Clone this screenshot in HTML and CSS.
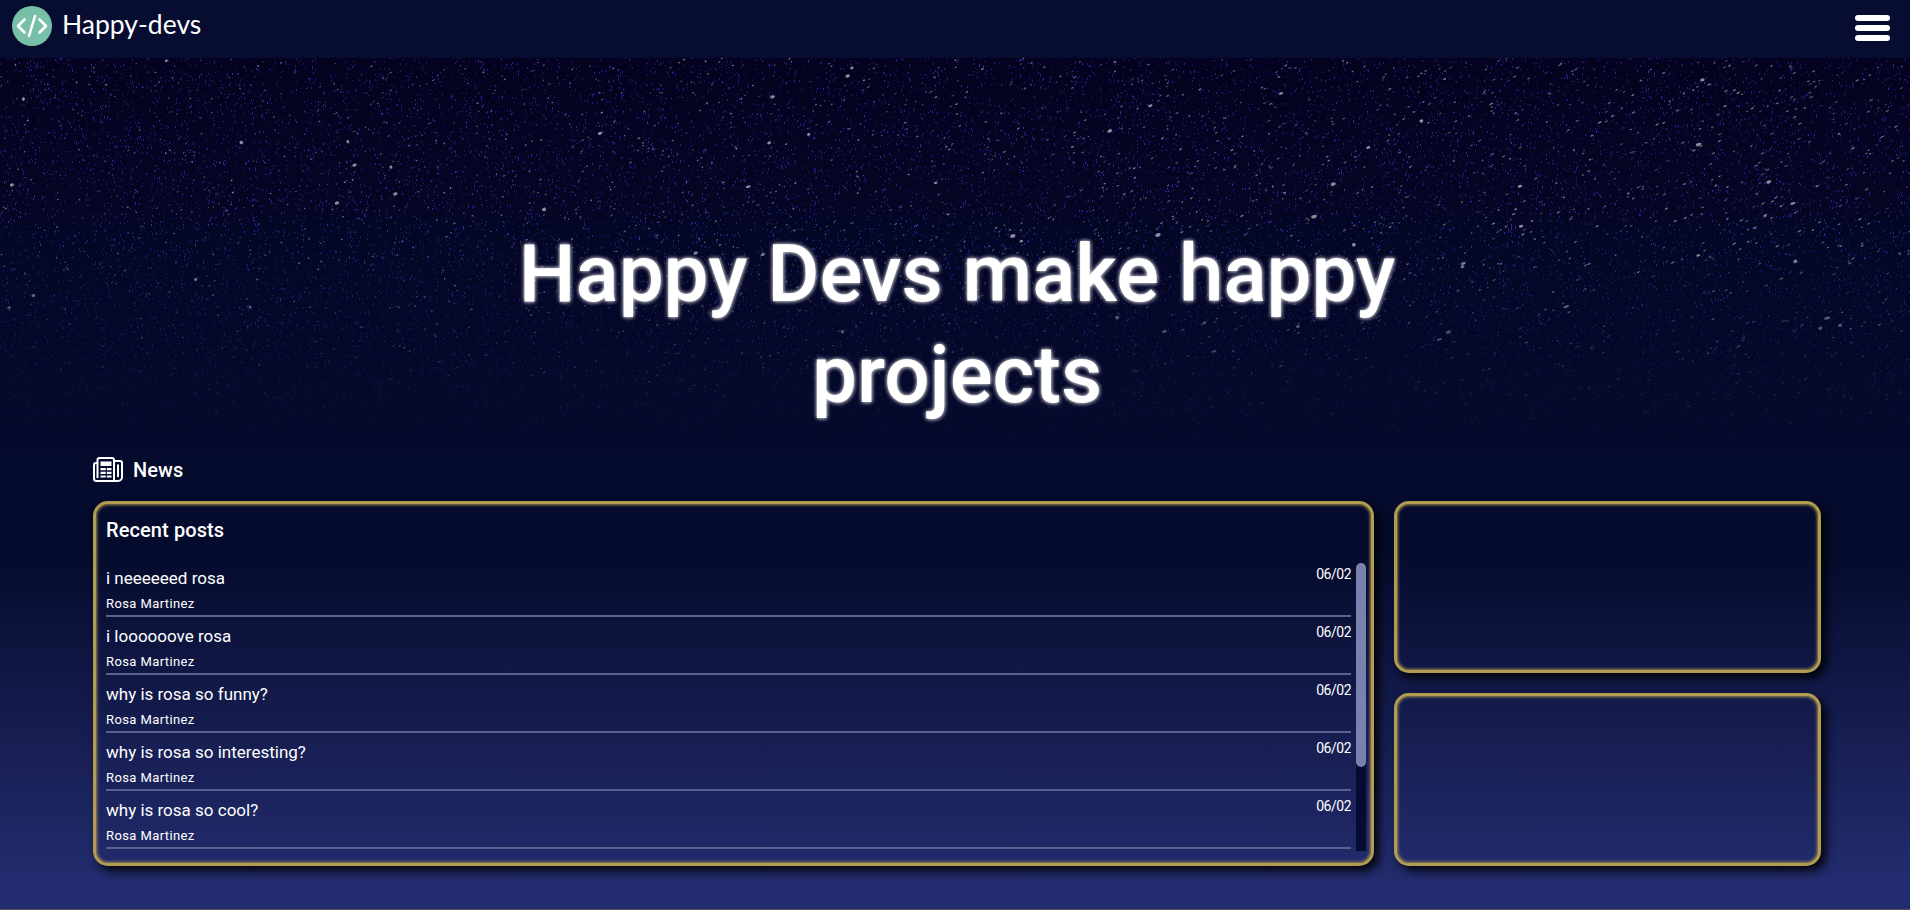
FILE: index.html
```html
<!DOCTYPE html>
<html lang="en">
<head>
	<meta charset="UTF-8">
	<title>Happy-devs</title>
	<link rel="stylesheet" href="styles.css">
</head>
<body>
<header class="topbar">
	<a class="brand" href="#">
		<svg class="brand-logo" viewBox="0 0 40 40">
			<circle cx="20" cy="20" r="20" fill="#77bfa8"/>
			<path d="M12.500 13.500 6 20l6.500 6.500M27.500 13.500 34 20l-6.500 6.500M23 10l-6 20" fill="none" stroke="#fff" stroke-width="2.600" stroke-linecap="round" stroke-linejoin="round"/>
		</svg>
		<span class="brand-name">Happy-devs</span>
	</a>
	<button class="menu-btn" type="button" aria-label="Menu"><i></i><i></i><i></i></button>
</header>
<section class="hero">
	<canvas id="stars" class="hero-stars"></canvas>
	<h1 class="hero-title">Happy Devs make happy projects</h1>
</section>
<main class="content">
	<h2 class="section-title">
		<svg class="section-icon" viewBox="0 0 30 25">
			<path d="M4.500 6V3a2 2 0 0 1 2-2H19a2 2 0 0 1 2 2v21H3.500A2.500 2.500 0 0 1 1 21.500V8a2 2 0 0 1 2-2h1.500v15" fill="none" stroke="#fff" stroke-width="2"/>
			<path d="M21 4h6a2 2 0 0 1 2 2v14a4 4 0 0 1-4 4h-4M25 7.500V20" fill="none" stroke="#fff" stroke-width="2"/>
			<path d="M7.500 4.500H18.500v4.500H7.500zM7.500 11h5.200v2.200H7.500zM13.800 11h4.700v2.200h-4.700zM7.500 14.700h5.200v2.200H7.500zM13.800 14.700h4.700v2.200h-4.700zM7.500 18.400h5.200v2.200H7.500zM13.800 18.400h4.700v2.200h-4.700z" fill="#fff"/>
		</svg>
		News
	</h2>
	<div class="panels">
		<section class="panel panel-posts">
			<h3 class="panel-title">Recent posts</h3>
			<div class="posts-wrap">
				<ul class="posts">
					<li class="post"><div><p class="post-title">i neeeeeed rosa</p><p class="post-author">Rosa Martinez</p></div><time class="post-date">06/02</time></li>
					<li class="post"><div><p class="post-title">i loooooove rosa</p><p class="post-author">Rosa Martinez</p></div><time class="post-date">06/02</time></li>
					<li class="post"><div><p class="post-title">why is rosa so funny?</p><p class="post-author">Rosa Martinez</p></div><time class="post-date">06/02</time></li>
					<li class="post"><div><p class="post-title">why is rosa so interesting?</p><p class="post-author">Rosa Martinez</p></div><time class="post-date">06/02</time></li>
					<li class="post"><div><p class="post-title">why is rosa so cool?</p><p class="post-author">Rosa Martinez</p></div><time class="post-date">06/02</time></li>
				</ul>
				<div class="scrollbar"><div class="scrollbar-thumb"></div></div>
			</div>
		</section>
		<section class="panel"></section>
		<section class="panel"></section>
	</div>
</main>
<script src="stars.js"></script>
</body>
</html>
```

FILE: styles.css
```css
* {
	box-sizing: border-box;
}
html, body {
	margin: 0;
	height: 910px;
	overflow: hidden;
}
body {
	display: flex;
	flex-direction: column;
	font-family: Roboto, "Liberation Sans", sans-serif;
	color: #fff;
	background: linear-gradient(#050b2c 0, #050b2c 550px, #232c6e 880px, #232c6e 910px);
	border-bottom: 1px solid #55534f;
}
.topbar {
	height: 58px;
	flex: none;
	display: flex;
	align-items: flex-start;
	justify-content: space-between;
	padding: 6px 20px 0 12px;
	background: #060d30;
}
.brand {
	display: flex;
	align-items: center;
	gap: 10px;
	color: #fff;
	text-decoration: none;
}
.brand-logo {
	width: 40px;
	height: 40px;
}
.brand-name {
	font-family: Lato, sans-serif;
	font-size: 26.500px;
	line-height: 36px;
	margin-bottom: 4px;
}
.menu-btn {
	display: flex;
	flex-direction: column;
	gap: 4px;
	width: 35px;
	margin-top: 9px;
	padding: 0;
	background: none;
	border: 0;
}
.menu-btn i {
	display: block;
	height: 6px;
	border-radius: 3px;
	background: #fff;
}
.hero {
	position: relative;
	height: 392px;
	flex: none;
	display: flex;
	justify-content: center;
	align-items: flex-end;
	padding: 0 0 24px 4px;
	background: linear-gradient(#03031f, #050a2c);
}
.hero-stars {
	position: absolute;
	left: 0;
	top: 0;
	width: 100%;
	height: 100%;
	-webkit-mask-image: linear-gradient(#000 45%, transparent 100%);
	mask-image: linear-gradient(#000 45%, transparent 100%);
}
.hero-title {
	position: relative;
	margin: 0;
	width: 1000px;
	font-size: 80px;
	line-height: 101px;
	font-weight: 500;
	text-align: center;
	text-shadow: 0 0 4px #fff, 1px 1px 4px rgba(255,255,255,.25);
}
.content {
	flex: 1;
	padding: 0 89px 0 93px;
}
.section-title {
	display: flex;
	align-items: center;
	gap: 10px;
	height: 51px;
	margin: 0;
	padding-bottom: 12px;
	font-size: 20px;
	font-weight: 500;
	letter-spacing: .1px;
}
.section-icon {
	width: 30px;
	height: 25px;
}
.panels {
	display: grid;
	grid-template-columns: 1281px 427px;
	grid-template-rows: 172px 173px;
	gap: 20px;
}
.panel {
	border: 3px solid #b19c52;
	border-radius: 15px;
	box-shadow: 5px 5px 10px rgba(0,0,0,.9), inset 0 0 3px 1px rgba(177,156,82,.85);
}
.panel-posts {
	grid-row: span 2;
	display: flex;
	flex-direction: column;
	padding: 0 5px 12px 10px;
}
.panel-title {
	height: 59px;
	margin: 0;
	padding-top: 14px;
	font-size: 20px;
	line-height: 24px;
	font-weight: 500;
	letter-spacing: .1px;
}
.posts-wrap {
	flex: 1;
	min-height: 0;
	display: flex;
	gap: 5px;
}
.posts {
	flex: 1;
	margin: 0;
	padding: 0;
	list-style: none;
	overflow: hidden;
	display: flex;
	flex-direction: column;
	gap: 4px;
}
.scrollbar {
	width: 10px;
	background: #060b33;
}
.scrollbar-thumb {
	height: 204px;
	border-radius: 5px;
	background: #7a80b0;
}
.post {
	flex: none;
	height: 54px;
	display: flex;
	justify-content: space-between;
	border-bottom: 2px solid #5a608f;
}
.post p {
	margin: 0;
}
.post-title {
	padding-top: 5px;
	font-size: 17px;
	line-height: 20px;
}
.post-author {
	padding-top: 8px;
	font-size: 13px;
	line-height: 16px;
	letter-spacing: .4px;
}
.post-date {
	font-size: 14px;
	line-height: 16px;
	padding-top: 3px;
	letter-spacing: -.5px;
}
```

FILE: stars.js
```js
// starfield behind the hero title, seeded so it draws the same every time
var c = document.getElementById('stars');
var w = c.width = c.offsetWidth;
var h = c.height = c.offsetHeight;
var g = c.getContext('2d');
var seed = 4711;
function rnd() {
	seed = (seed * 16807) % 2147483647;
	return seed / 2147483647;
}
// faint blue dust
for (var i = 0; i < 24000; i++) {
	g.fillStyle = 'rgba(' + (40 + rnd() * 40 | 0) + ',' + (30 + rnd() * 30 | 0) + ',' + (150 + rnd() * 70 | 0) + ',' + (.3 + rnd() * .5) + ')';
	g.fillRect(rnd() * w | 0, rnd() * h | 0, 1, 1 + (rnd() * 2 | 0));
}
// small grey stars
for (i = 0; i < 2600; i++) {
	var x = rnd() * w, y = rnd() * h;
	// they turn into little streaks towards the right
	var rx = (.5 + rnd() * .5) * (1 + x / w * 1.2);
	var ry = .5 + rnd() * .25;
	g.fillStyle = 'rgba(190,190,205,' + (.3 + rnd() * .4) + ')';
	g.beginPath();
	g.ellipse(x, y, rx, ry, -.5, 0, 7);
	g.fill();
}
// a few bigger ones
for (i = 0; i < 60; i++) {
	x = rnd() * w; y = rnd() * h * .75;
	g.fillStyle = 'rgba(185,185,195,.75)';
	g.beginPath();
	g.ellipse(x, y, (1.2 + rnd() * .8) * (1 + x / w * .7), 1.1 + rnd() * .7, -.3, 0, 7);
	g.fill();
}
```
